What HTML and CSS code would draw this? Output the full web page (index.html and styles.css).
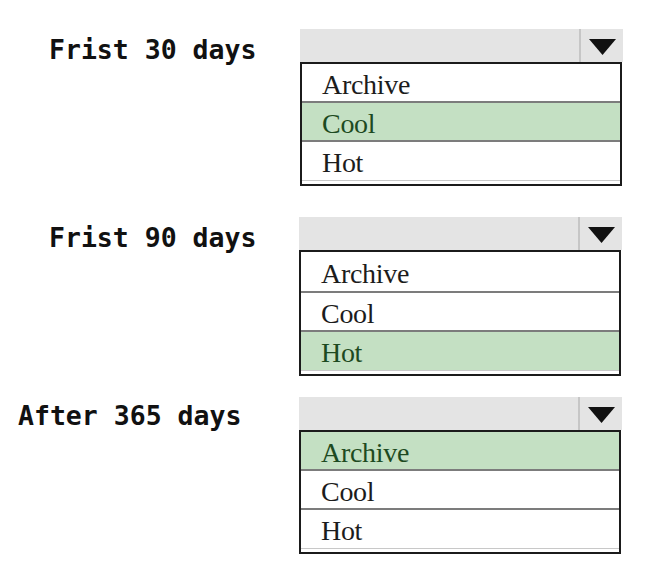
FILE: index.html
```html
<!DOCTYPE html>
<html>
<head>
<meta charset="utf-8">
<link rel="stylesheet" href="styles.css">
</head>
<body>
<div class="page">
  <div class="q q1">
    <div class="label label-a">Frist 30 days</div>
    <div class="dd">
      <div class="bar"><div class="btn"><svg width="27" height="16" viewBox="0 0 27 16"><polygon points="0,0 27,0 13.5,16" fill="#111"/></svg></div></div>
      <div class="list">
        <div class="opt">Archive</div>
        <div class="opt sel">Cool</div>
        <div class="opt last">Hot</div>
      </div>
    </div>
  </div>
  <div class="q q2">
    <div class="label label-a">Frist 90 days</div>
    <div class="dd">
      <div class="bar"><div class="btn"><svg width="27" height="16" viewBox="0 0 27 16"><polygon points="0,0 27,0 13.5,16" fill="#111"/></svg></div></div>
      <div class="list">
        <div class="opt tall">Archive</div>
        <div class="opt">Cool</div>
        <div class="opt sel last">Hot</div>
      </div>
    </div>
  </div>
  <div class="q q3">
    <div class="label label-b">After 365 days</div>
    <div class="dd">
      <div class="bar"><div class="btn"><svg width="27" height="16" viewBox="0 0 27 16"><polygon points="0,0 27,0 13.5,16" fill="#111"/></svg></div></div>
      <div class="list">
        <div class="opt sel">Archive</div>
        <div class="opt">Cool</div>
        <div class="opt last">Hot</div>
      </div>
    </div>
  </div>
</div>
</body>
</html>
```

FILE: styles.css
```css
html, body {
  margin: 0;
  padding: 0;
  background: #ffffff;
}

.page {
  width: 647px;
  height: 571px;
  padding-top: 29px;
  box-sizing: border-box;
}

.q {
  display: flex;
  align-items: flex-start;
}

.q2 { margin-top: 31px; }
.q3 { margin-top: 21px; }

.label {
  width: 299px;
  box-sizing: border-box;
  font-family: "DejaVu Sans Mono", "Liberation Mono", monospace;
  font-weight: bold;
  font-size: 26.5px;
  line-height: 32px;
  padding-top: 5px;
  color: #111;
  white-space: pre;
}

.label-a { padding-left: 49px; }
.label-b { padding-left: 18px; padding-top: 3px; }

.q1 .dd { margin-left: 1px; }

.dd {
  width: 323px;
}

.bar {
  height: 33px;
  background: #e4e4e4;
  display: flex;
  justify-content: flex-end;
}

.btn {
  width: 44px;
  border-left: 2px solid #c6c6c6;
  display: flex;
  align-items: center;
  justify-content: center;
  padding-top: 2px;
  box-sizing: border-box;
}

.list {
  width: 322px;
  box-sizing: border-box;
  border: 2px solid #1b1b1b;
  padding-bottom: 3px;
  background: #fff;
}

.opt {
  height: 39px;
  box-sizing: border-box;
  padding-top: 4px;
  padding-left: 20px;
  font-family: "Liberation Serif", "Times New Roman", serif;
  font-size: 28px;
  line-height: 34px;
  letter-spacing: -0.3px;
  color: #1c1c1c;
  border-bottom: 2px solid #7c7c7c;
}

.opt.tall {
  height: 41px;
  padding-top: 5px;
}

.opt.last {
  border-bottom: 1px solid #c8c8c8;
}

.opt.sel {
  background: #c4e0c3;
  color: #1d4a21;
}
```
